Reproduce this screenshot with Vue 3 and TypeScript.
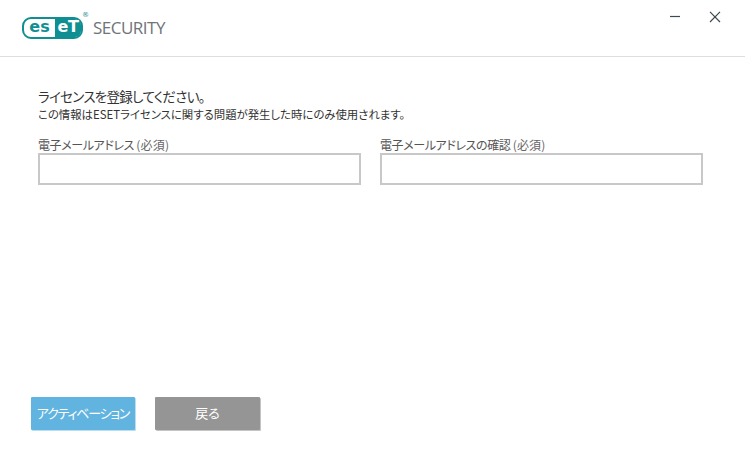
<script setup lang="ts">
const fields: string[] = ['電子メールアドレス', '電子メールアドレスの確認']
</script>

<template>
  <div class="window">
    <header class="titlebar">
      <div class="brand">
        <div class="logo">
          <span class="logo-es">es</span><span class="logo-et">eT</span>
          <span class="reg">®</span>
        </div>
        <span class="product">SECURITY</span>
      </div>
      <div class="controls">
        <svg width="12" height="12" viewBox="0 0 12 12"><path d="M1 5.5H11" stroke="#3f4a50" stroke-width="1.2" fill="none" /></svg>
        <svg width="12" height="12" viewBox="0 0 12 12"><path d="M1 .8 11 11M11 .8 1 11" stroke="#3f4a50" stroke-width="1.2" fill="none" /></svg>
      </div>
    </header>

    <main class="content">
      <h1 class="title">ライセンスを登録してください。</h1>
      <p class="subtitle">この情報はESETライセンスに関する問題が発生した時にのみ使用されます。</p>
      <div class="fields">
        <label v-for="f in fields" :key="f" class="field">
          <span class="label">{{ f }} <span class="req">(必須)</span></span>
          <input class="input" type="text" />
        </label>
      </div>
    </main>

    <footer class="actions">
      <button class="btn primary" type="button">アクティベーション</button>
      <button class="btn secondary" type="button">戻る</button>
    </footer>
  </div>
</template>

<style scoped>
.window {
  width: 745px;
  height: 462px;
  display: flex;
  flex-direction: column;
  background: #fff;
  font-family: "Noto Sans CJK JP", "Open Sans", sans-serif;
  font-feature-settings: "palt";
  color: #333;
  overflow: hidden;
}
.titlebar {
  height: 56px;
  border-bottom: 1px solid #dedede;
  display: flex;
  justify-content: space-between;
  flex-shrink: 0;
}
.brand {
  display: flex;
  align-items: center;
  gap: 10px;
  padding: 0 0 0 22px;
  height: 56px;
}
.logo {
  position: relative;
  display: flex;
  width: 61px;
  height: 22px;
  border: 2.5px solid #0f8f92;
  border-radius: 9px;
  box-sizing: border-box;
  font-family: "DejaVu Sans", sans-serif;
  font-weight: 700;
  font-size: 16px;
  line-height: 15px;
  letter-spacing: 0;
  font-feature-settings: normal;
}
.logo-es {
  width: 31px;
  color: #0f8f92;
  text-align: center;
}
.logo-et {
  flex: 1;
  background: #0f8f92;
  color: #fff;
  text-align: center;
  letter-spacing: -0.5px;
  border-radius: 0 6px 6px 0;
}
.reg {
  position: absolute;
  right: -8px;
  top: -8px;
  font-size: 7px;
  line-height: 8px;
  font-weight: 400;
  color: #0f8f92;
}
.product {
  font-family: "Open Sans", sans-serif;
  font-size: 17px;
  letter-spacing: -0.5px;
  color: #6f7479;
  margin-bottom: 2px;
}
.controls {
  display: flex;
  gap: 28px;
  padding: 11px 24px 0 0;
}
.content {
  flex: 1;
  padding: 30px 42px 0 38px;
}
.title {
  margin: 0;
  font-size: 13.5px;
  letter-spacing: -0.7px;
  line-height: 19px;
  font-weight: 400;
}
.subtitle {
  margin: 0;
  font-size: 11.4px;
  line-height: 16px;
}
.fields {
  display: flex;
  gap: 19px;
  margin-top: 15px;
}
.field {
  width: 323px;
  display: flex;
  flex-direction: column;
}
.label {
  font-size: 12px;
  letter-spacing: -0.4px;
  line-height: 16px;
  height: 16px;
  color: #555;
}
.req {
  font-size: 12px;
  letter-spacing: 0.2px;
  color: #666;
}
.input {
  height: 32px;
  box-sizing: border-box;
  border: 2px solid #c8c8c8;
  background: #fff;
  outline: none;
  padding: 0 4px;
}
.actions {
  display: flex;
  gap: 20px;
  padding: 0 0 32px 31px;
}
.btn {
  height: 33px;
  border: none;
  border-radius: 1px;
  color: #fff;
  font-family: inherit;
  font-feature-settings: inherit;
  font-size: 13px;
  padding: 0 0 3px;
}
.primary {
  width: 104px;
  background: #62b4e0;
  box-shadow: 1px 1px 0 #b9deef;
  letter-spacing: -1.2px;
}
.secondary {
  width: 105px;
  background: #959595;
  box-shadow: 1px 1px 0 #c4c4c4;
}
</style>
